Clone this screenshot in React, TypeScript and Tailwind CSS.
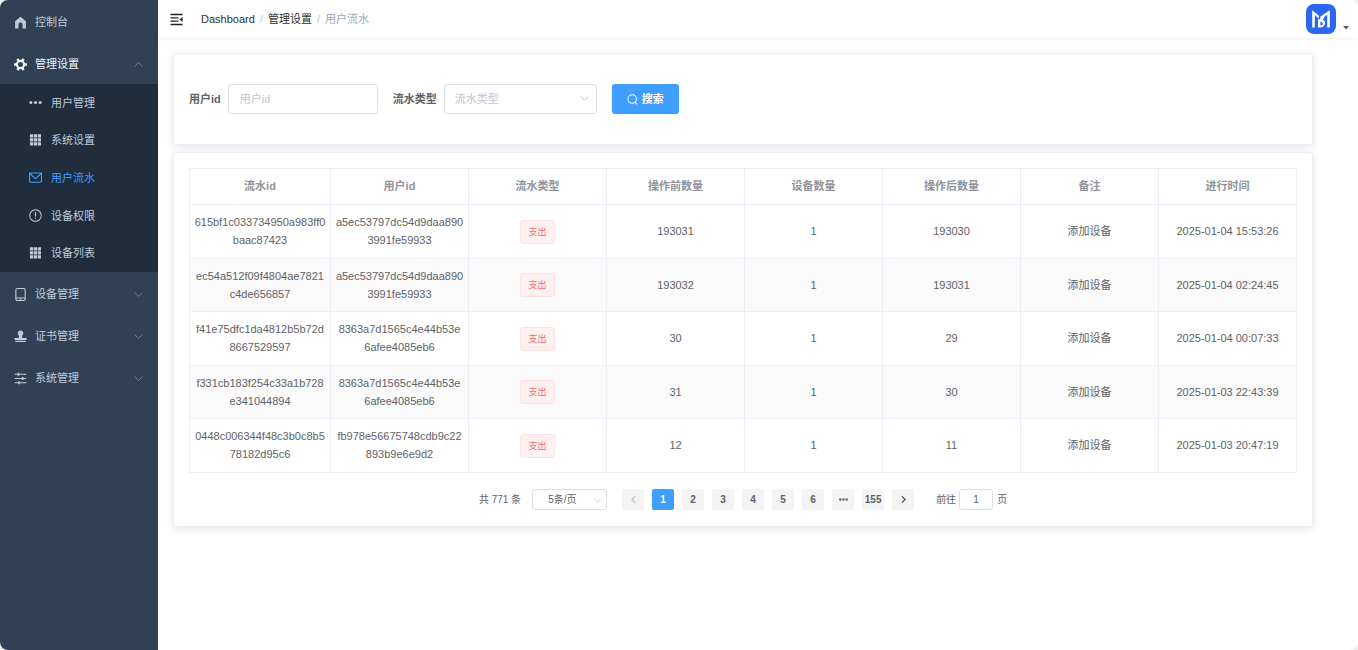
import type { ReactNode } from 'react';

const S = ({ children, className = 'size-[13px]' }: { children: ReactNode; className?: string }) => (
  <svg viewBox="0 0 14 14" fill="none" stroke="currentColor" className={`shrink-0 ${className}`} aria-hidden="true">
    {children}
  </svg>
);

const HomeIcon = () => (
  <S><path d="M7 .8 1.2 5.6v7.8h3.6V9.2a2.2 2.2 0 0 1 4.4 0v4.2h3.6V5.6z" fill="currentColor" stroke="none" /></S>
);
const GearIcon = () => (
  <S>
    <circle cx="7" cy="7" r="3.9" strokeWidth="2.4" />
    <path d="M3.7 1 5 3M10.3 1 9 3M3.7 13 5 11M10.3 13 9 11M0 7h2.2M11.8 7H14" strokeWidth="2.6" />
  </S>
);
const MoreIcon = () => (
  <S>
    <g fill="currentColor" stroke="none"><circle cx="2" cy="7" r="1.7" /><circle cx="7" cy="7" r="1.7" /><circle cx="12" cy="7" r="1.7" /></g>
  </S>
);
const GridIcon = () => (
  <S>
    <path fill="currentColor" stroke="none" d="M1 .4h3.5v3.5H1zM5.2.4h3.5v3.5H5.2zM9.4.4h3.5v3.5H9.4zM1 4.6h3.5v3.5H1zM5.2 4.6h3.5v3.5H5.2zM9.4 4.6h3.5v3.5H9.4zM1 8.8h3.5v3.5H1zM5.2 8.8h3.5v3.5H5.2zM9.4 8.8h3.5v3.5H9.4z" />
  </S>
);
const MailIcon = () => (
  <S><path d="M.6 2.2h12.8v8.9a1 1 0 0 1-1 1H1.6a1 1 0 0 1-1-1zM.9 2.5l5 5q1.1 1 2.2 0l5-5" strokeWidth="1.2" /></S>
);
const WarningIcon = () => (
  <S><circle cx="7" cy="7" r="6.2" strokeWidth="1.1" /><path d="M7 3.4v4.6M7 9.3v1.3" strokeWidth="1.3" /></S>
);
const PhoneIcon = () => (
  <S><rect x="2" y=".6" width="10" height="12.8" rx="1.5" strokeWidth="1.2" /><path d="M2 10.7h10" strokeWidth="1.1" /><path d="M6 12.1h2" /></S>
);
const StampIcon = () => (
  <S>
    <path fill="currentColor" stroke="none" d="M7 .6a3 3 0 0 1 1.7 5.5c-.3.9 0 1.9.5 2.4h4.2v2.3H.6V8.5h4.2c.5-.5.8-1.5.5-2.4A3 3 0 0 1 7 .6zM1.3 11.7h11.4v1.3H1.3z" />
  </S>
);
const SlidersIcon = () => (
  <S><path d="M.8 2.4h12.4M.8 7h12.4M.8 11.6h12.4" strokeWidth="1.1" /><path d="M4.8.7v3.4M9.4 5.3v3.4M5.4 9.9v3.4" strokeWidth="1.7" /></S>
);
const FoldIcon = () => (
  <S><path d="M.5 1.6h13M.5 5.2H9M.5 8.8H9M.5 12.4h13" strokeWidth="1.5" /><path d="M13.5 4.4v5.2L10.2 7z" fill="currentColor" stroke="none" /></S>
);
const Chevron = ({ className }: { className: string }) => (
  <S className={className}><path d="m2 4.5 5 5 5-5" strokeWidth="1.2" /></S>
);
const PagerArrow = ({ className }: { className: string }) => (
  <S className={className}><path d="m2 4.5 5 5 5-5" strokeWidth="2.2" /></S>
);

const Logo = () => (
  <svg viewBox="0 0 30 30" className="size-[30px]" aria-hidden="true">
    <rect width="30" height="30" rx="8" fill="#2b68ee" />
    <g fill="#fff">
      <path d="M6.2 6.2 12.8 11.4V14.4L8.8 11.2V23.4H6.2z" />
      <path d="M23.8 6.2 14.4 12.4V15.4L21.2 10.8V23.4H23.8z" />
      <path d="M12 15.2h2.4v6h.8c2.2 0 2.2-2.3.4-3l-1.4-.8c-.9-.7-.6-2.6.6-3.4l3.4-2.2v2.4l-1.6 1.2c2.8 1.4 3.2 4.4 1.4 6.4-1 1.2-2.4 1.6-4 1.6H12z" />
    </g>
  </svg>
);

const subItems = [
  { label: '用户管理', icon: <MoreIcon /> },
  { label: '系统设置', icon: <GridIcon /> },
  { label: '用户流水', icon: <MailIcon />, active: true },
  { label: '设备权限', icon: <WarningIcon /> },
  { label: '设备列表', icon: <GridIcon /> },
];

const groups = [
  { label: '设备管理', icon: <PhoneIcon /> },
  { label: '证书管理', icon: <StampIcon /> },
  { label: '系统管理', icon: <SlidersIcon /> },
];

const headers = ['流水id', '用户id', '流水类型', '操作前数量', '设备数量', '操作后数量', '备注', '进行时间'];

const rows = [
  { id: ['615bf1c033734950a983ff0', 'baac87423'], user: ['a5ec53797dc54d9daa890', '3991fe59933'], before: 193031, after: 193030, time: '2025-01-04 15:53:26' },
  { id: ['ec54a512f09f4804ae7821', 'c4de656857'], user: ['a5ec53797dc54d9daa890', '3991fe59933'], before: 193032, after: 193031, time: '2025-01-04 02:24:45' },
  { id: ['f41e75dfc1da4812b5b72d', '8667529597'], user: ['8363a7d1565c4e44b53e', '6afee4085eb6'], before: 30, after: 29, time: '2025-01-04 00:07:33' },
  { id: ['f331cb183f254c33a1b728', 'e341044894'], user: ['8363a7d1565c4e44b53e', '6afee4085eb6'], before: 31, after: 30, time: '2025-01-03 22:43:39' },
  { id: ['0448c006344f48c3b0c8b5', '78182d95c6'], user: ['fb978e56675748cdb9c22', '893b9e6e9d2'], before: 12, after: 11, time: '2025-01-03 20:47:19' },
];

const Hash = ({ parts }: { parts: string[] }) => (
  <td className="border border-[#ebeef5] pb-px">{parts[0]}<wbr />{parts[1]}</td>
);

const Cell = ({ children }: { children: ReactNode }) => <td className="border border-[#ebeef5] pb-px">{children}</td>;

const pageButton = 'flex h-[21px] w-[22px] items-center justify-center rounded-[2px] font-bold';
const menuRow = 'flex h-[42px] w-full items-center gap-2 px-[14px] pt-[2px]';

function Sidebar() {
  return (
    <nav className="w-[158px] shrink-0 bg-[#304156] text-[#bfcbd9]">
      <a href="#home" className={menuRow}><HomeIcon />控制台</a>
      <button type="button" aria-expanded="true" className={`${menuRow} text-[#f4f4f5]`}>
        <GearIcon />管理设置
        <Chevron className="ml-auto size-[11px] rotate-180 text-[#76808f]" />
      </button>
      <ul className="grid h-[188px] auto-rows-fr bg-[#1f2d3d]">
        {subItems.map((item) => (
          <li key={item.label} className="flex">
            <a href="#menu" className={`flex w-full items-center gap-[9px] pl-[29px] ${item.active ? 'text-[#409eff]' : ''}`}>
              {item.icon}{item.label}
            </a>
          </li>
        ))}
      </ul>
      {groups.map((g) => (
        <button key={g.label} type="button" aria-expanded="false" className={menuRow}>
          {g.icon}{g.label}
          <Chevron className="ml-auto size-[11px] text-[#76808f]" />
        </button>
      ))}
    </nav>
  );
}

function Header() {
  return (
    <header className="relative flex h-[38px] items-center pl-3 pr-[9px] shadow-[0_1px_3px_rgba(0,21,41,0.08)]">
      <button type="button" aria-label="折叠菜单" className="text-[#222]"><FoldIcon /></button>
      <ol className="ml-[18px] flex items-center gap-[5px]">
        <li><a href="#dashboard" className="text-[#303133]">Dashboard</a></li>
        <li className="text-[#c0c4cc]">/</li>
        <li><a href="#settings" className="text-[#303133]">管理设置</a></li>
        <li className="text-[#c0c4cc]">/</li>
        <li className="text-[#97a8be]">用户流水</li>
      </ol>
      <button type="button" aria-label="账户菜单" className="ml-auto flex items-end gap-[7px]">
        <Logo />
        <svg viewBox="0 0 6 4" className="mb-1 h-1 w-[6px]" aria-hidden="true"><path d="M0 0h6L3 3.6z" fill="#5a5e66" /></svg>
      </button>
    </header>
  );
}

const card = 'rounded-[3px] border border-[#ebeef5] bg-white shadow-[0_2px_9px_rgba(0,0,0,0.1)]';

function SearchForm() {
  return (
    <form className={`${card} flex items-center px-[15px] py-[30px]`}>
      <label htmlFor="uid" className="mr-[7px] font-bold">用户id</label>
      <input id="uid" placeholder="用户id" className="mr-[15px] h-[30px] w-[150px] rounded-[3px] border border-[#dcdfe6] px-[11px] outline-none placeholder:text-[#c0c4cc]" />
      <label htmlFor="kind" className="mr-[7px] font-bold">流水类型</label>
      <div className="relative mr-[15px]">
        <select id="kind" className="h-[30px] w-[153px] appearance-none rounded-[3px] border border-[#dcdfe6] bg-white px-[10px] text-[#c0c4cc] outline-none">
          <option>流水类型</option>
        </select>
        <Chevron className="pointer-events-none absolute right-[7px] top-[9px] size-[11px] text-[#c0c4cc]" />
      </div>
      <button type="button" className="flex h-[30px] w-[67px] items-center justify-center gap-1 rounded-[3px] bg-[#409eff] font-bold text-white">
        <S className="size-[11px]"><circle cx="6.6" cy="6.4" r="5.4" strokeWidth="1.3" /><path d="m10.4 10.4 2.6 2.8" strokeWidth="1.3" /></S>
        搜索
      </button>
    </form>
  );
}

function Pagination() {
  return (
    <div className="mt-4 flex items-center justify-center text-[10px]">
      <span className="mr-[11px]">共 771 条</span>
      <div className="relative mr-[15px]">
        <select aria-label="每页条数" className="block h-[21px] w-[75px] appearance-none rounded-[3px] border border-[#dcdfe6] bg-white pl-[15px] outline-none">
          <option>5条/页</option>
        </select>
        <Chevron className="pointer-events-none absolute right-[5px] top-[7px] size-[9px] text-[#c0c4cc]" />
      </div>
      <div className="mr-[22px] flex gap-2">
        <button type="button" aria-label="上一页" disabled className={`${pageButton} bg-[#f4f4f5] text-[#c0c4cc]`}>
          <PagerArrow className="size-[9px] rotate-90" />
        </button>
        {['1', '2', '3', '4', '5', '6', '•••', '155'].map((p) => (
          <button key={p} type="button" className={`${pageButton} ${p === '1' ? 'bg-[#409eff] text-white' : 'bg-[#f4f4f5]'}`}>
            {p === '•••' ? (
              <svg viewBox="0 0 9 3" className="h-[3px] w-[9px]" fill="currentColor" role="img" aria-label="更多页">
                <circle cx="1.3" cy="1.5" r="1.2" /><circle cx="4.5" cy="1.5" r="1.2" /><circle cx="7.7" cy="1.5" r="1.2" />
              </svg>
            ) : p}
          </button>
        ))}
        <button type="button" aria-label="下一页" className={`${pageButton} bg-[#f4f4f5]`}>
          <PagerArrow className="size-[9px] -rotate-90" />
        </button>
      </div>
      <label htmlFor="goto" className="mr-[3px]">前往</label>
      <input id="goto" defaultValue="1" className="mr-1 h-[21px] w-[34px] rounded-[3px] border border-[#dcdfe6] text-center outline-none" />
      <span>页</span>
    </div>
  );
}

export default function App() {
  return (
    <div className="bg-[#eceef0] font-['Liberation_Sans','Noto_Sans_CJK_SC',sans-serif] text-[11px] leading-[18px] text-[#606266]">
      <div className="flex min-h-screen overflow-hidden rounded-lg bg-white">
        <Sidebar />
        <div className="min-w-0 flex-1">
          <Header />
          <main className="flex flex-col gap-[7px] pb-[15px] pl-[15px] pr-[45px] pt-[15px]">
            <SearchForm />
            <section className={`${card} px-[15px] pb-4 pt-[15px]`}>
              <table className="w-full table-fixed border-collapse text-center">
                <thead>
                  <tr className="h-9 text-[#909399]">
                    {headers.map((h, i) => (
                      <th key={h} className={`border border-[#ebeef5] pb-px font-bold ${i === 0 ? 'w-[141px]' : ''}`}>{h}</th>
                    ))}
                  </tr>
                </thead>
                <tbody>
                  {rows.map((r) => (
                    <tr key={r.time} className="h-[54px] even:h-[53px] even:bg-[#fafafa]">
                      <Hash parts={r.id} />
                      <Hash parts={r.user} />
                      <td className="border border-[#ebeef5]">
                        <span className="inline-flex h-6 w-[35px] items-center justify-center rounded-[3px] border border-[#fde2e2] bg-[#fef0f0] align-middle text-[9px] text-[#f56c6c]">支出</span>
                      </td>
                      <Cell>{r.before}</Cell>
                      <Cell>1</Cell>
                      <Cell>{r.after}</Cell>
                      <Cell>添加设备</Cell>
                      <Cell>{r.time}</Cell>
                    </tr>
                  ))}
                </tbody>
              </table>
              <Pagination />
            </section>
          </main>
        </div>
      </div>
    </div>
  );
}
